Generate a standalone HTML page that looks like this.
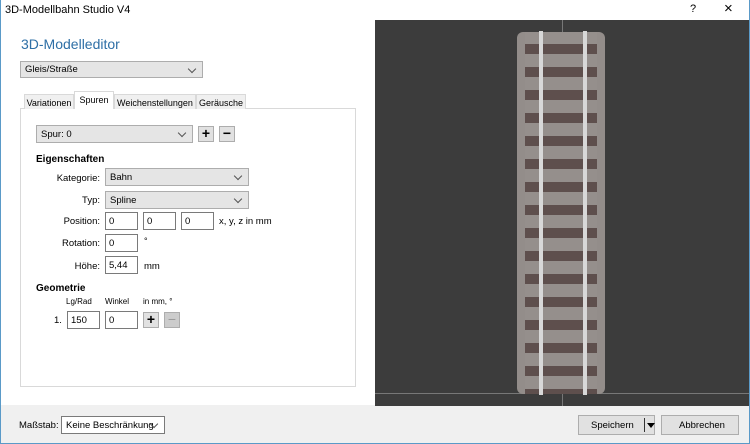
<!DOCTYPE html><html><head><style>
*{box-sizing:border-box}body{margin:0;width:750px;height:444px;overflow:hidden;font-family:"Liberation Sans",sans-serif;font-size:11px;color:#000;background:#fff;position:relative}
.a{position:absolute}
.combo{position:absolute;background:#e5e5e5;border:1px solid #adadad;height:18px;padding:3px 4px;font-size:9.5px}
.combo:after{content:"";position:absolute;right:7px;top:4px;width:5px;height:5px;border-right:1px solid #555;border-bottom:1px solid #555;transform:rotate(45deg)}
.in{position:absolute;border:1px solid #7a7a7a;background:#fff;height:18px;padding:3px 3px;font-size:9.5px}
.btn{position:absolute;border:1px solid #adadad;background:#e1e1e1;width:16px;height:16px;text-align:center;font-weight:bold;font-size:14px;line-height:13px}
.lbl{position:absolute;font-size:9.5px;text-align:right}
.tab{position:absolute;top:94px;height:15px;background:#f0f0f0;border:1px solid #d9d9d9;border-bottom:none;font-size:9px;padding:3px 0;text-align:center;white-space:nowrap;overflow:hidden}
</style></head><body>
<div class="a" style="left:0;top:0;width:750px;height:444px;border:1px solid #5a9ac8;border-top:none"></div>
<div class="a" style="left:5px;top:4px;font-size:11px">3D-Modellbahn Studio V4</div>
<div class="a" style="left:690px;top:3px;font-size:11px">?</div>
<div class="a" style="left:724px;top:0px;font-size:15px">×</div>
<div class="a" style="left:21px;top:36px;font-size:14px;color:#2e6fa6">3D-Modelleditor</div>
<div class="combo" style="left:20px;top:61px;width:183px;height:17px;padding-top:2px">Gleis/Straße</div>
<div class="a" style="left:20px;top:108px;width:336px;height:279px;border:1px solid #d9d9d9"></div>
<div class="tab" style="left:24px;width:50px">Variationen</div>
<div class="tab" style="left:74px;top:91px;height:18px;width:40px;background:#fff;padding-top:3px">Spuren</div>
<div class="tab" style="left:114px;width:82px">Weichenstellungen</div>
<div class="tab" style="left:196px;width:50px">Geräusche</div>
<div class="combo" style="left:36px;top:125px;width:157px">Spur: 0</div>
<div class="btn" style="left:198px;top:126px">+</div>
<div class="btn" style="left:219px;top:126px">−</div>
<div class="a" style="left:36px;top:154px;font-weight:bold;font-size:10px">Eigenschaften</div>
<div class="lbl" style="left:40px;top:173px;width:60px">Kategorie:</div>
<div class="combo" style="left:105px;top:168px;width:144px">Bahn</div>
<div class="lbl" style="left:40px;top:195px;width:60px">Typ:</div>
<div class="combo" style="left:105px;top:191px;width:144px">Spline</div>
<div class="lbl" style="left:40px;top:216px;width:60px">Position:</div>
<div class="in" style="left:105px;top:212px;width:33px">0</div>
<div class="in" style="left:143px;top:212px;width:33px">0</div>
<div class="in" style="left:181px;top:212px;width:33px">0</div>
<div class="a" style="left:219px;top:216px;font-size:9.5px">x, y, z in mm</div>
<div class="lbl" style="left:40px;top:238px;width:60px">Rotation:</div>
<div class="in" style="left:105px;top:234px;width:33px">0</div>
<div class="a" style="left:144px;top:236px;font-size:9px">°</div>
<div class="lbl" style="left:40px;top:261px;width:60px">Höhe:</div>
<div class="in" style="left:105px;top:256px;width:33px">5,44</div>
<div class="a" style="left:144px;top:261px;font-size:9.5px">mm</div>
<div class="a" style="left:36px;top:283px;font-weight:bold;font-size:10px">Geometrie</div>
<div class="a" style="left:66px;top:297px;font-size:8px">Lg/Rad</div>
<div class="a" style="left:105px;top:297px;font-size:8px">Winkel</div>
<div class="a" style="left:143px;top:297px;font-size:8px">in mm, °</div>
<div class="a" style="left:54px;top:315px;font-size:9.5px">1.</div>
<div class="in" style="left:67px;top:311px;width:33px">150</div>
<div class="in" style="left:105px;top:311px;width:33px">0</div>
<div class="btn" style="left:143px;top:312px">+</div>
<div class="btn" style="left:164px;top:312px;background:#ccc;color:#999;font-weight:normal">−</div>
<div class="a" style="left:0;top:405px;width:750px;height:38px;background:#f0f0f0;border-left:1px solid #5a9ac8;border-right:1px solid #5a9ac8"></div>
<div class="a" style="left:19px;top:420px;font-size:9.5px">Maßstab:</div>
<div class="combo" style="left:61px;top:416px;width:104px;background:#fff;border-color:#7a7a7a">Keine Beschränkung</div>
<div class="a" style="left:578px;top:415px;width:77px;height:20px;background:#e1e1e1;border:1px solid #adadad;font-size:9.5px;padding:4px 0 0 12px">Speichern</div>
<div class="a" style="left:644px;top:418px;width:1px;height:14px;background:#333"></div>
<div class="a" style="left:647px;top:423px;border:4px solid transparent;border-top:5px solid #000"></div>
<div class="a" style="left:661px;top:415px;width:78px;height:20px;background:#e1e1e1;border:1px solid #adadad;font-size:9.5px;padding:4px 0 0 17px">Abbrechen</div>
<div class="a" style="left:375px;top:20px;width:374px;height:386px;background:#3c3c3c"></div>
<div class="a" style="left:375px;top:393px;width:374px;height:1px;background:#777"></div>
<div class="a" style="left:562px;top:20px;width:1px;height:386px;background:#777"></div>
<div class="a" style="left:517px;top:32px;width:88px;height:362px;border-radius:6px;background:#938d8a"></div>
<div class="a" style="left:525px;top:32px;width:72px;height:362px;background:repeating-linear-gradient(180deg,#958f8c 0px,#958f8c 12px,#5e4f4d 12px,#5e4f4d 22px,#958f8c 22px,#958f8c 23px)"></div>
<div class="a" style="left:539px;top:31px;width:4px;height:364px;background:#d8d8d8"></div>
<div class="a" style="left:583px;top:31px;width:4px;height:364px;background:#d8d8d8"></div>
</body></html>
